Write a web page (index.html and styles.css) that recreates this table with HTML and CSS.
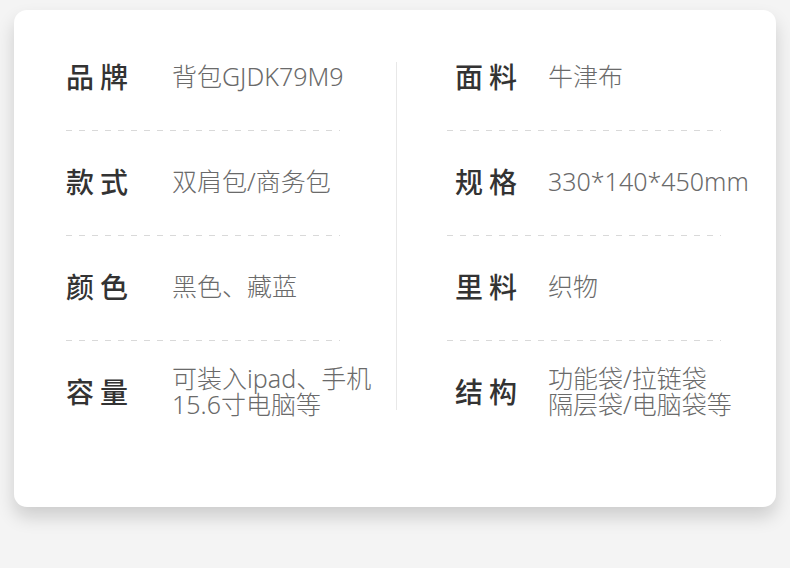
FILE: index.html
```html
<!DOCTYPE html>
<html>
<head>
    <title>商品参数</title>
    <link rel="stylesheet" href="styles.css">
</head>
<body>
    <div class="page">
        <div class="card">
            <div class="col col-left">
                <div class="row">
                    <span class="label">品牌</span>
                    <span class="value">背包GJDK79M9</span>
                </div>
                <div class="row">
                    <span class="label">款式</span>
                    <span class="value">双肩包/商务包</span>
                </div>
                <div class="row">
                    <span class="label">颜色</span>
                    <span class="value">黑色、藏蓝</span>
                </div>
                <div class="row last">
                    <span class="label">容量</span>
                    <span class="value">可装入ipad、手机<br>15.6寸电脑等</span>
                </div>
            </div>

            <div class="divider"></div>

            <div class="col col-right">
                <div class="row">
                    <span class="label">面料</span>
                    <span class="value">牛津布</span>
                </div>
                <div class="row">
                    <span class="label">规格</span>
                    <span class="value">330*140*450mm</span>
                </div>
                <div class="row">
                    <span class="label">里料</span>
                    <span class="value">织物</span>
                </div>
                <div class="row last">
                    <span class="label">结构</span>
                    <span class="value">功能袋/拉链袋<br>隔层袋/电脑袋等</span>
                </div>
            </div>
        </div>
    </div>
</body>
</html>
```

FILE: styles.css
```css
body {
    background-color: #ffffff;
    margin: 0;
    padding: 0;
    font-family: 'Noto Sans', 'Noto Sans CJK SC', sans-serif;
}

.page {
    background-color: #f4f4f4;
    height: 568px;
    padding: 10px 14px 0 14px;
    box-sizing: border-box;
}

.card {
    background-color: #ffffff;
    height: 497px;
    border-radius: 13px;
    box-shadow: 0 10px 18px rgba(0, 0, 0, 0.16);
    display: grid;
    grid-template-columns: 330px 1px 1fr;
    padding: 16px 0 0 52px;
    box-sizing: border-box;
}

.col-right {
    padding-left: 50px;
}

.divider {
    background-color: #e8e8e8;
    margin-top: 36px;
    height: 348px;
}

.row {
    height: 105px;
    display: flex;
    align-items: center;
    box-sizing: border-box;
    padding-bottom: 5px;
    background-image: linear-gradient(to right, #d9d9d9 6px, transparent 6px);
    background-size: 13px 1px;
    background-repeat: repeat-x;
    background-position: left bottom;
    width: 274px;
}

.row.last {
    background-image: none;
    width: auto;
}

.label {
    font-family: 'Noto Sans CJK SC', sans-serif;
    font-size: 28px;
    font-weight: 500;
    color: #333333;
    letter-spacing: 6px;
    flex-shrink: 0;
    width: 106px;
}

.col-right .label {
    width: 93px;
    margin-left: 8px;
}

.value {
    font-size: 25px;
    font-weight: 300;
    color: #6a6a6a;
    line-height: 26px;
    white-space: nowrap;
}
```
